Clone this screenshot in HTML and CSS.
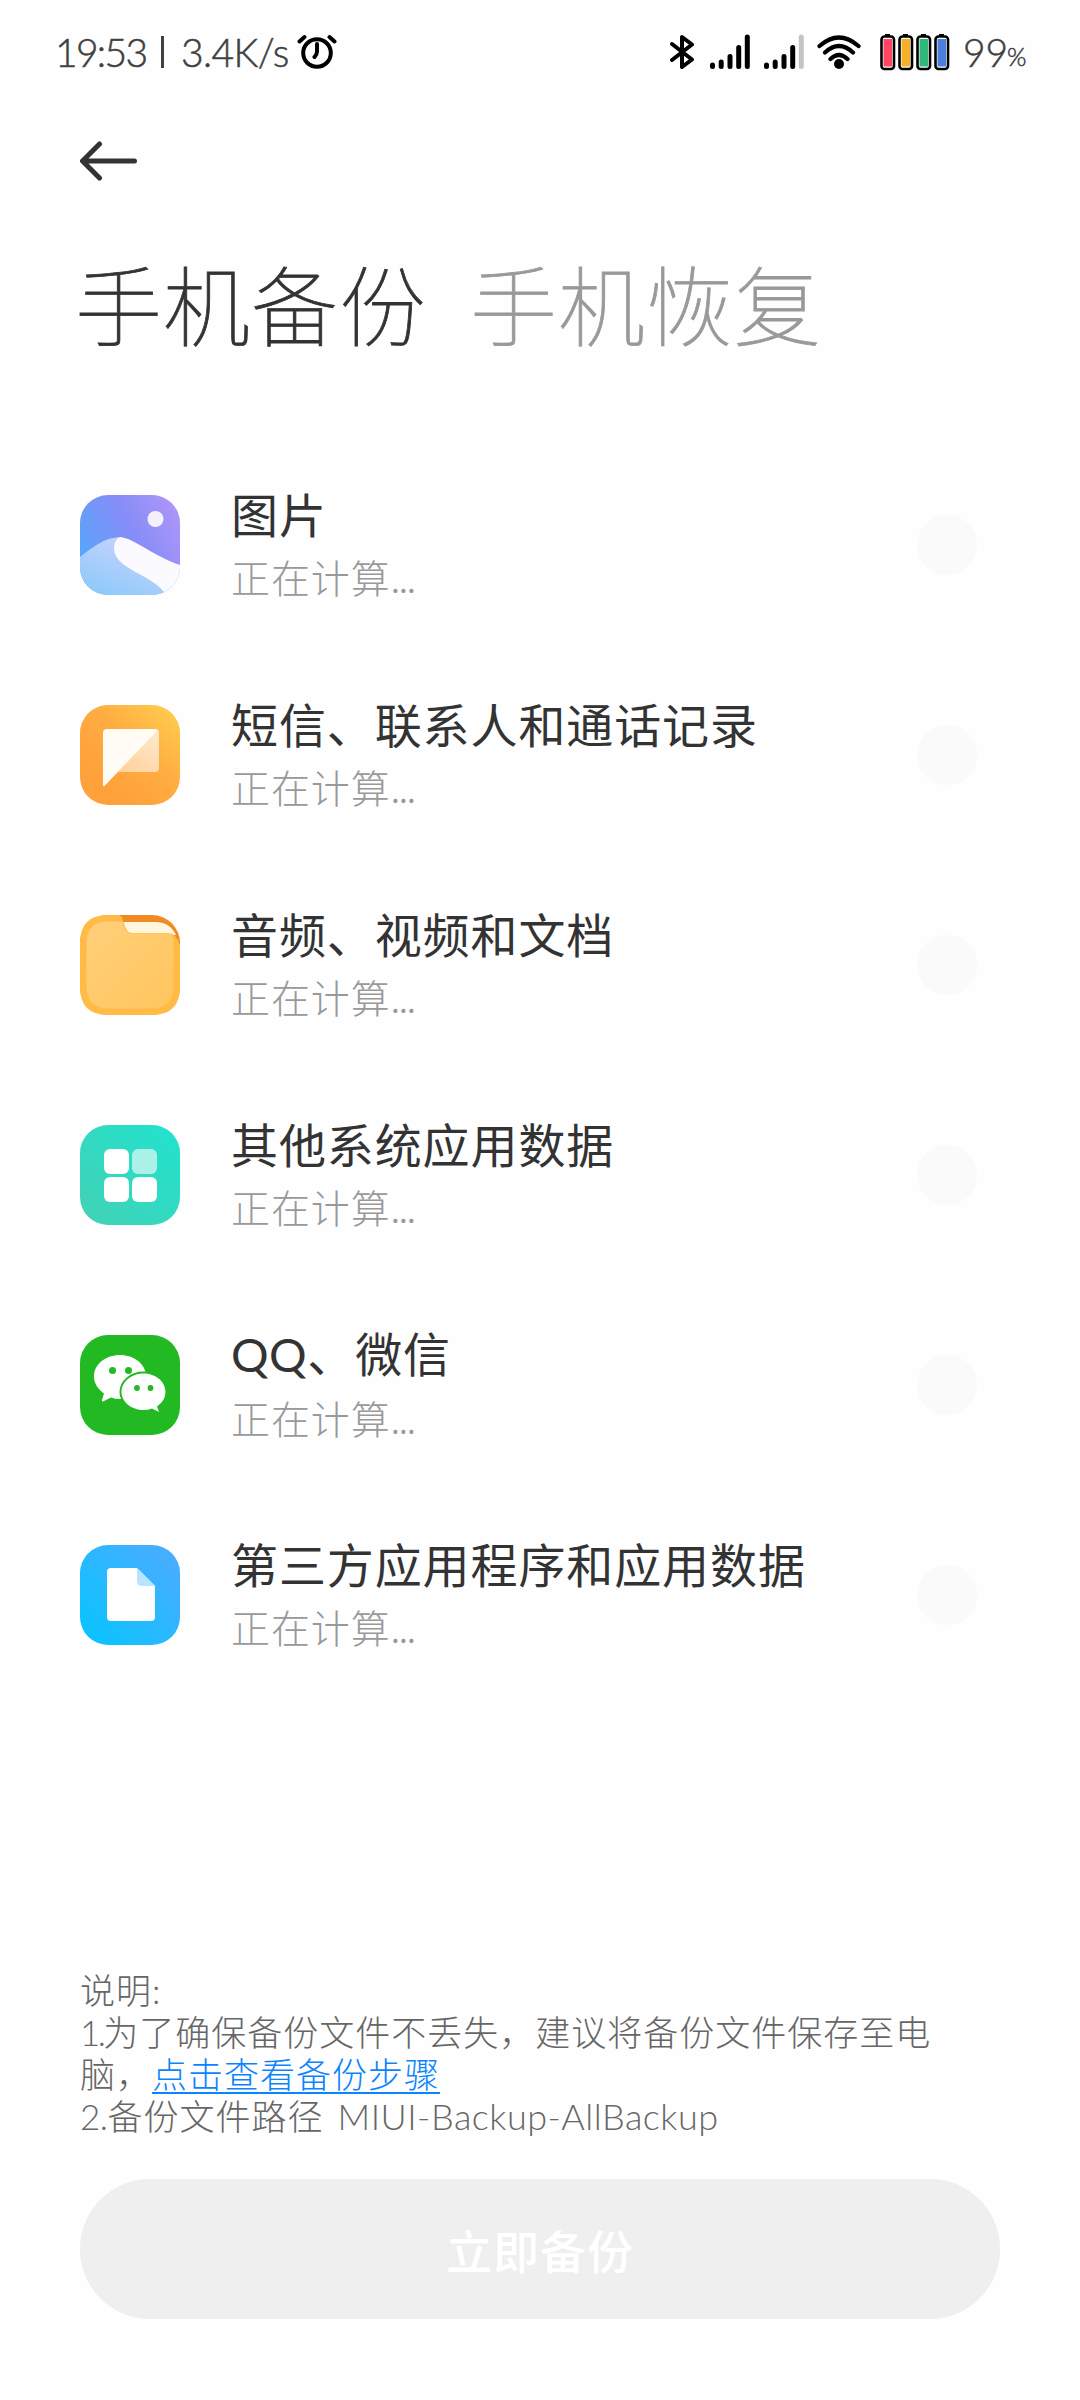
FILE: index.html
```html
<!DOCTYPE html>
<html lang="zh-CN">
<head>
<meta charset="utf-8">
<title>手机备份</title>
<link rel="stylesheet" href="styles.css">
</head>
<body>
<div class="screen">
  <header class="status">
    <div class="status-left">
      <span class="clock">19:53</span><span class="divider"></span><span class="speed">3.4K/s</span>
      <svg class="alarm" width="40" height="36" viewBox="0 0 40 36" fill="none" stroke="#000" stroke-width="4" stroke-linecap="round">
        <circle cx="20" cy="19" r="13.8"/><path d="M20 10v7.5q0 3-2.5 5.500M2.500 7.500l5-4.500M37.500 7.500l-5-4.500"/>
      </svg>
    </div>
    <div class="status-right">
      <svg class="bluetooth" width="26" height="36" viewBox="0 0 26 36" fill="none" stroke="#000" stroke-width="4" stroke-linecap="round" stroke-linejoin="round">
        <path d="M3 10l20 15.500-10 7.500V3l10 7.500L3 26"/>
      </svg>
      <svg class="signal" width="42" height="36" viewBox="0 0 42 36" stroke="#000" stroke-width="5" stroke-linecap="round">
        <path d="M3.500 31v1.500M12.200 28v4.500M21 22.500v10M29.700 13.500v19M38.300 3v29.500"/>
      </svg>
      <svg class="signal" width="42" height="36" viewBox="0 0 42 36" stroke="#000" stroke-width="5" stroke-linecap="round">
        <path d="M3.500 31v1.500M12.200 28v4.500M21 22.500v10M29.700 13.500v19"/><path stroke="#c4c4c4" d="M38.300 3v29.500"/>
      </svg>
      <svg class="wifi" width="44" height="36" viewBox="0 0 44 36" fill="none" stroke="#000" stroke-width="4.200" stroke-linecap="round">
        <path d="M2.500 12Q22-5 41.500 12M8 18.500Q22 5.500 36 18.500M13.500 25q8.500-8 17 0"/><circle cx="22" cy="30" r="5" fill="#000" stroke="none"/>
      </svg>
      <svg class="battery" width="70" height="38" viewBox="0 0 70 38">
        <g fill="#000"><path d="M5 1h5v4H5zM23 1h5v4h-5zM41 1h5v4h-5zM59 1h5v4h-5z"/></g>
        <g stroke="#000" stroke-width="2.600" fill="#fff">
          <rect x="1.500" y="3.500" width="12.500" height="32.500" rx="3"/><rect x="19.500" y="3.500" width="12.500" height="32.500" rx="3"/><rect x="37.500" y="3.500" width="12.500" height="32.500" rx="3"/><rect x="55.500" y="3.500" width="12.500" height="32.500" rx="3"/>
        </g>
        <rect x="3.500" y="6" width="8.500" height="27.500" fill="#ff4763"/><rect x="21.500" y="6" width="8.500" height="27.500" fill="#f5b027"/><rect x="39.500" y="6" width="8.500" height="27.500" fill="#2fb87a"/><rect x="57.500" y="6" width="8.500" height="27.500" fill="#4a7fe0"/>
      </svg>
      <span class="level">99</span><span class="percent">%</span>
    </div>
  </header>

  <nav class="nav">
    <svg width="58" height="40" viewBox="0 0 58 40" fill="none" stroke="#333" stroke-width="5" stroke-linecap="round" stroke-linejoin="round">
      <path d="M19.500 3L2.500 20l17 17M3 20h51.500"/>
    </svg>
  </nav>

  <div class="tabs"><span class="tab active">手机备份</span><span class="tab">手机恢复</span></div>

  <main class="list">
    <div class="row">
      <svg class="icon" viewBox="0 0 100 100">
        <defs>
          <linearGradient id="sky" x1="0" y1=".6" x2="1" y2=".1"><stop stop-color="#58a5fa"/><stop offset=".5" stop-color="#858df8"/><stop offset="1" stop-color="#b196f8"/></linearGradient>
          <linearGradient id="dune" x1="0" y1="1" x2=".7" y2="0"><stop stop-color="#86c9fb"/><stop offset="1" stop-color="#d0d3fb"/></linearGradient>
          <clipPath id="tile"><rect width="100" height="100" rx="28"/></clipPath>
        </defs>
        <g clip-path="url(#tile)">
          <rect width="100" height="100" fill="url(#sky)"/>
          <path d="M0 62C15 50 25 43 40 42L100 71V100H0z" fill="url(#dune)"/>
          <path d="M40 42C54 43 76 63 100 70V100H86C74 79 34 75 34 53Q34 45 40 42z" fill="#fbfbff"/>
          <circle cx="75.500" cy="24" r="8" fill="#f4f0ff"/>
        </g>
      </svg>
      <div class="text"><div class="name">图片</div><div class="state">正在计算<span class="dots">...</span></div></div>
      <span class="check"></span>
    </div>
    <div class="row">
      <svg class="icon" viewBox="0 0 100 100">
        <defs>
          <linearGradient id="amber" x1=".25" y1=".8" x2="1" y2="0"><stop stop-color="#ffa13a"/><stop offset=".45" stop-color="#ffad42"/><stop offset="1" stop-color="#ffd04e"/></linearGradient>
          <linearGradient id="flap" x1="0" y1="1" x2=".7" y2="0"><stop stop-color="#ffd09a"/><stop offset="1" stop-color="#ffe7c8"/></linearGradient>
        </defs>
        <rect width="100" height="100" rx="28" fill="url(#amber)"/>
        <path d="M77 24q2 1 2 4v35q0 4-4 4H38z" fill="url(#flap)"/>
        <path d="M27 24H75q3 0 2 2L24.500 81q-1.500 1-1.500-1V28q0-4 4-4z" fill="#fffcf5"/>
      </svg>
      <div class="text"><div class="name">短信、联系人和通话记录</div><div class="state">正在计算<span class="dots">...</span></div></div>
      <span class="check"></span>
    </div>
    <div class="row">
      <svg class="icon" viewBox="0 0 100 100">
        <defs><linearGradient id="folder" x1="0" y1="0" x2="1" y2="1"><stop stop-color="#ffcf79"/><stop offset="1" stop-color="#ffc65e"/></linearGradient></defs>
        <rect width="100" height="100" rx="28" fill="#f08a22"/>
        <path d="M43 7H75Q90 7 96 20H50Q46 18 43 7z" fill="#fff6e0"/>
        <path d="M28 0H38Q42 0 43 6L46 14Q48 18 53 18H88Q96 18 100 30V72Q100 100 72 100H28Q0 100 0 72V28Q0 0 28 0z" fill="#ffbb46"/>
        <path d="M28 6.500H42L45 14Q47 18.500 53 18.500H90Q93.500 22 93.500 30V71Q93.500 93.500 71 93.500H29Q6.500 93.500 6.500 71V28Q6.500 6.500 28 6.500z" fill="url(#folder)"/>
      </svg>
      <div class="text"><div class="name">音频、视频和文档</div><div class="state">正在计算<span class="dots">...</span></div></div>
      <span class="check"></span>
    </div>
    <div class="row">
      <svg class="icon" viewBox="0 0 100 100">
        <defs><linearGradient id="teal" x1="0" y1="1" x2="1" y2="0"><stop stop-color="#43d1b5"/><stop offset="1" stop-color="#20e3ce"/></linearGradient></defs>
        <rect width="100" height="100" rx="28" fill="url(#teal)"/>
        <g fill="#fff"><rect x="24" y="24" width="25" height="25" rx="6"/><rect x="52" y="24" width="25" height="25" rx="6" opacity=".6"/><rect x="24" y="52" width="25" height="25" rx="6"/><rect x="52" y="52" width="25" height="25" rx="6"/></g>
      </svg>
      <div class="text"><div class="name">其他系统应用数据</div><div class="state">正在计算<span class="dots">...</span></div></div>
      <span class="check"></span>
    </div>
    <div class="row">
      <svg class="icon" viewBox="0 0 100 100">
        <rect width="100" height="100" rx="28" fill="#22b922"/>
        <path d="M40 20C54 20 66 29 66 41.500S54 64 40 64Q35 64 31 62.500L23 66.500Q21.500 67 22 65L24 58.500C18 54 14 48.500 14 41.500 14 29 26 20 40 20z" fill="#fff"/>
        <path d="M63.500 38.500C75.500 38.500 85.500 46.500 85.500 57Q85.500 65.500 77 71.500L79 77 72 73.500Q68 75 63.500 75C51.500 75 41.500 67 41.500 57S51.500 38.500 63.500 38.500z" fill="#fff" stroke="#22b922" stroke-width="4" paint-order="stroke"/>
        <g fill="#22b922"><circle cx="32.500" cy="35.500" r="3.500"/><circle cx="48.500" cy="35.500" r="3.500"/><circle cx="57" cy="53" r="2.900"/><circle cx="70.500" cy="53" r="2.900"/></g>
      </svg>
      <div class="text"><div class="name"><span class="latin">QQ</span>、微信</div><div class="state">正在计算<span class="dots">...</span></div></div>
      <span class="check"></span>
    </div>
    <div class="row">
      <svg class="icon" viewBox="0 0 100 100">
        <defs><linearGradient id="blue" x1="0" y1="1" x2="1" y2="0"><stop offset=".1" stop-color="#0cc3ff"/><stop offset=".9" stop-color="#49adff"/></linearGradient></defs>
        <rect width="100" height="100" rx="28" fill="url(#blue)"/>
        <path d="M31 23H57L75 41V72q0 4-4 4H31q-4 0-4-4V27q0-4 4-4z" fill="#fff"/>
        <path d="M57 23L75 41H62q-5 0-5-5z" fill="#b9e4ff"/>
      </svg>
      <div class="text"><div class="name">第三方应用程序和应用数据</div><div class="state">正在计算<span class="dots">...</span></div></div>
      <span class="check"></span>
    </div>
  </main>

  <section class="notes">
    <p>说明:</p>
    <p><span class="num one">1.</span>为了确保备份文件不丢失，建议将备份文件保存至电<br>脑，<a class="link">点击查看备份步骤</a></p>
    <p><span class="num">2.</span>备份文件路径<span class="path">MIUI-Backup-AllBackup</span></p>
  </section>

  <button class="submit">立即备份</button>
</div>
</body>
</html>
```
FILE: styles.css
```css
* { box-sizing: border-box; }
body { margin: 0; background: #fefefe; font-family: "Noto Sans CJK SC", sans-serif; color: #333; }
p { margin: 0; }
svg { display: block; flex: none; }
.screen { width: 1080px; height: 2400px; display: flex; flex-direction: column; overflow: hidden; }

.status { height: 104px; padding: 0 52px 0 55px; display: flex; justify-content: space-between; font-family: Lato, sans-serif; font-size: 39px; font-weight: 300; line-height: 104px; color: #404040; -webkit-text-stroke: .5px #404040; white-space: nowrap; }
.status-left, .status-right { display: flex; align-items: center; }
.clock { width: 106px; letter-spacing: -1.7px; }
.divider { width: 3px; height: 32px; background: #404040; }
.speed { margin-left: 17px; width: 116px; letter-spacing: -.6px; }
.bluetooth { margin-right: 14px; }
.signal { margin-right: 12px; }
.wifi { margin-right: 19px; }
.battery { margin-right: 13px; }
.level { width: 44px; }
.percent { width: 21px; font-size: 25px; padding-top: 7px; }

.nav { height: 114px; padding: 37px 0 0 80px; }
.tabs { height: 276px; padding: 21px 0 0 75px; display: flex; gap: 43px; font-size: 87px; line-height: 126px; font-weight: 100; letter-spacing: 1px; white-space: nowrap; }
.tab { color: #999; -webkit-text-stroke: .8px #999; }
.tab.active { color: #333; -webkit-text-stroke: .8px #333; }

.list { display: flex; flex-direction: column; }
.row { height: 210px; padding: 0 103px 108px 80px; display: flex; align-items: center; }
.icon { width: 100px; height: 100px; }
.text { margin-left: 51px; flex: 1; padding-bottom: 4px; white-space: nowrap; }
.name { font-size: 47px; line-height: 66px; letter-spacing: .9px; font-weight: 400; }
.latin { font-family: Lato, sans-serif; letter-spacing: .5px; }
.state { font-size: 39px; line-height: 60px; letter-spacing: .9px; font-weight: 300; color: #999; }
.dots { letter-spacing: -1.8px; }
.check { width: 60px; height: 60px; border-radius: 50%; background: #fafafa; }

.notes { margin-top: 214px; height: 211px; padding: 1px 0 0 80px; font-family: Lato, "Noto Sans CJK SC", sans-serif; font-size: 35px; line-height: 42px; letter-spacing: 1px; font-weight: 300; color: #666; white-space: nowrap; }
.num { letter-spacing: -.5px; }
.num.one { letter-spacing: -2.6px; }
.path { font-size: 36px; line-height: 40px; margin-left: 14px; letter-spacing: .5px; }
.link { color: #0d84ff; text-decoration: underline; text-decoration-thickness: 2px; text-underline-offset: 4px; }

.submit { width: 920px; height: 140px; margin-left: 80px; border: 0; border-radius: 70px; background: #efefef; color: #fff; font: 500 46px/140px "Noto Sans CJK SC", sans-serif; letter-spacing: 1px; padding: 0 0 2px; }
```
